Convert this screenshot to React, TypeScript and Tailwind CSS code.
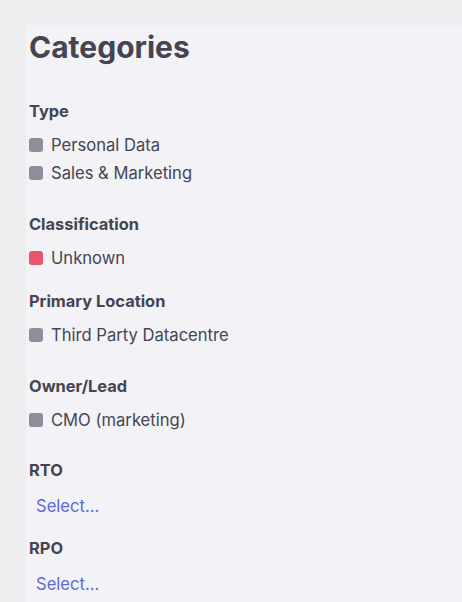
function Heading({ children }: { children: string }) {
  return <h3 className="text-[16.4px] font-bold leading-5 text-[#45444f]">{children}</h3>;
}

function Tag({ label, color }: { label: string; color: string }) {
  return (
    <li className="flex items-center gap-2 text-[16.6px] leading-7 text-[#464551]">
      <span className={`h-[14px] w-[14px] shrink-0 rounded-[3px] ${color}`} />
      {label}
    </li>
  );
}

export default function App() {
  return (
    <div
      className="min-h-screen bg-[#ededf0] pl-[26px] pt-[25px]"
      style={{ fontFamily: "Inter, 'Noto Sans', sans-serif" }}
    >
      <div className="min-h-[577px] bg-[#f2f2f7] pl-[3px] pt-[4px]">
        <h2 className="text-[30px] font-bold leading-9 text-[#45444f]">Categories</h2>

        <div className="mt-[36px]">
          <Heading>Type</Heading>
          <ul className="mt-[10px]">
            <Tag label="Personal Data" color="bg-[#8e8d9a]" />
            <Tag label="Sales & Marketing" color="bg-[#8e8d9a]" />
          </ul>
        </div>

        <div className="mt-[27px]">
          <Heading>Classification</Heading>
          <ul className="mt-[10px]">
            <Tag label="Unknown" color="bg-[#e8566a]" />
          </ul>
        </div>

        <div className="mt-[19px]">
          <Heading>Primary Location</Heading>
          <ul className="mt-[10px]">
            <Tag label="Third Party Datacentre" color="bg-[#8e8d9a]" />
          </ul>
        </div>

        <div className="mt-[27px]">
          <Heading>Owner/Lead</Heading>
          <ul className="mt-[10px]">
            <Tag label="CMO (marketing)" color="bg-[#8e8d9a]" />
          </ul>
        </div>

        <div className="mt-[26px]">
          <Heading>RTO</Heading>
          <button className="mt-[12px] block pl-[7px] text-[16.6px] leading-7 text-[#5b6bd8]">Select...</button>
        </div>

        <div className="mt-[18px]">
          <Heading>RPO</Heading>
          <button className="mt-[12px] block pl-[7px] text-[16.6px] leading-7 text-[#5b6bd8]">Select...</button>
        </div>
      </div>
    </div>
  );
}
